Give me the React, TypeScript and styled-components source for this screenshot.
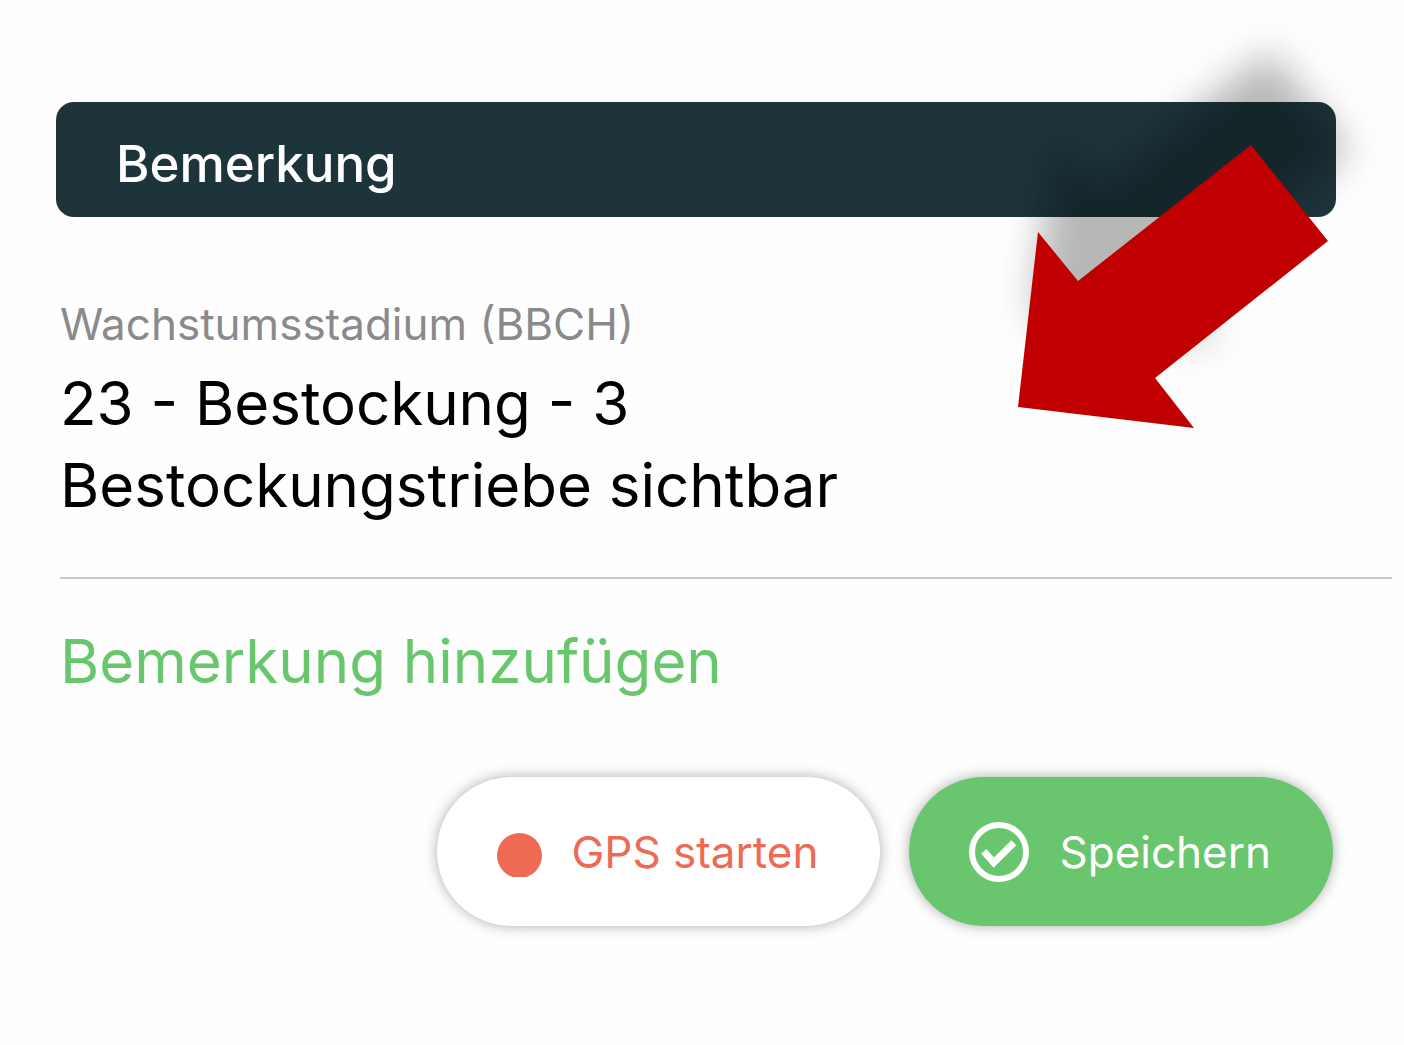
import React from "react";
import styled, { createGlobalStyle } from "styled-components";

const GlobalStyle = createGlobalStyle`
  *, *::before, *::after { box-sizing: border-box; }
  body {
    margin: 0;
    background: #fefefe;
    color: #000;
    font-family: Inter, "Liberation Sans", sans-serif;
  }
`;

const Page = styled.main`
  display: flex;
  flex-direction: column;
  padding: 102px 0 60px 56px;
`;

const SectionHeader = styled.header`
  position: relative;
  display: flex;
  align-items: center;
  height: 115px;
  margin-right: 68px;
  padding: 0 60px;
  border-radius: 18px;
  background: #1d343b;
`;

const SectionTitle = styled.h1`
  margin: 0;
  padding-top: 8px;
  color: #fff;
  font-size: 51px;
  font-weight: 500;
  line-height: 60px;
`;

const Arrow = styled.svg`
  position: absolute;
  top: -102px;
  right: -68px;
  width: 444px;
  height: 460px;
  overflow: visible;
  pointer-events: none;
`;

const Field = styled.section`
  margin: 79px 12px 0 4px;
  padding-bottom: 51px;
  border-bottom: 2px solid #c8c8c9;
`;

const FieldLabel = styled.h2`
  margin: 0;
  color: #8a8a8c;
  font-size: 44px;
  font-weight: 400;
  line-height: 56px;
`;

const FieldValue = styled.p`
  margin: 10px 0 0;
  font-size: 60px;
  line-height: 82px;
`;

const AddButton = styled.button`
  align-self: flex-start;
  margin: 41px 0 0 4px;
  padding: 0;
  border: 0;
  background: none;
  color: #68c76c;
  font: inherit;
  font-size: 60px;
  line-height: 82px;
  cursor: pointer;
`;

const Actions = styled.div`
  display: flex;
  justify-content: flex-end;
  gap: 29px;
  margin: 75px 71px 0 0;
`;

const PillButton = styled.button<{ $primary?: boolean }>`
  display: flex;
  align-items: center;
  gap: 30px;
  height: 149px;
  padding: 0 62px 0 60px;
  border: 0;
  border-radius: 75px;
  background: ${(p) => (p.$primary ? "#6ac66e" : "#fff")};
  color: ${(p) => (p.$primary ? "#fff" : "#ee6a55")};
  box-shadow: 0 0 14px rgba(0, 0, 0, 0.32);
  font: inherit;
  font-size: 44px;
  line-height: 56px;
  white-space: nowrap;
  cursor: pointer;
`;

const Icon = styled.svg`
  display: block;
  flex: none;
`;

const ARROW_POINTS =
  "291,145 368,241 195,378 234,428 58,407 78,232 118,281";

export default function App() {
  return (
    <>
      <GlobalStyle />
      <Page>
        <SectionHeader>
          <SectionTitle>Bemerkung</SectionTitle>
          <Arrow viewBox="0 0 444 460" aria-hidden="true">
            <defs>
              <filter id="soft" x="-30%" y="-30%" width="160%" height="160%">
                <feGaussianBlur stdDeviation="19" />
              </filter>
            </defs>
            <polygon
              points={ARROW_POINTS}
              transform="translate(18 -90)"
              fill="#000"
              fillOpacity="0.28"
              stroke="#000"
              strokeOpacity="0.28"
              strokeWidth="4"
              filter="url(#soft)"
            />
            <polygon points={ARROW_POINTS} fill="#c00000" />
          </Arrow>
        </SectionHeader>

        <Field>
          <FieldLabel>Wachstumsstadium (BBCH)</FieldLabel>
          <FieldValue>
            23 - Bestockung - 3<br />
            Bestockungstriebe sichtbar
          </FieldValue>
        </Field>

        <AddButton type="button">Bemerkung hinzufügen</AddButton>

        <Actions>
          <PillButton type="button">
            <Icon width="45" height="50" viewBox="0 0 45 50" aria-hidden="true">
              <circle cx="22.5" cy="28.5" r="22.5" fill="currentColor" />
            </Icon>
            GPS starten
          </PillButton>
          <PillButton type="button" $primary>
            <Icon width="60" height="60" viewBox="0 0 60 60" fill="none" stroke="currentColor" aria-hidden="true">
              <circle cx="30" cy="30" r="27" strokeWidth="6" />
              <path d="M14.8 29.4 L24.8 40.6 L44.8 20.8" strokeWidth="7" />
            </Icon>
            Speichern
          </PillButton>
        </Actions>
      </Page>
    </>
  );
}
